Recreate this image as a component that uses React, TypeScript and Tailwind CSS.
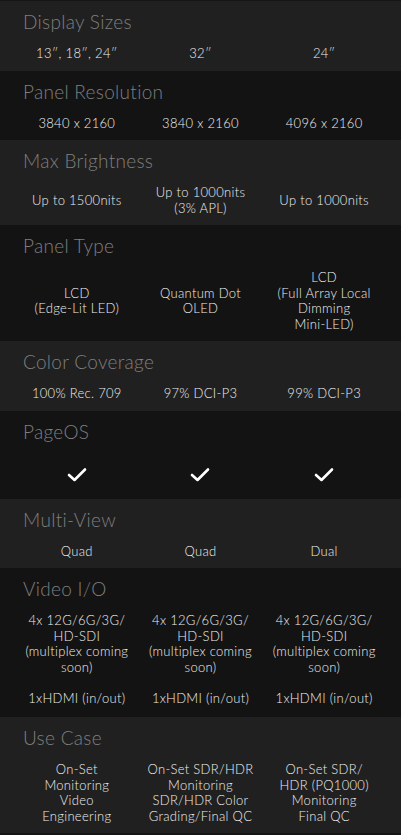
import React from "react";

type Row = { title: string; values: (string[] | "check")[]; light: boolean; pb?: string };

const rows: Row[] = [
  { title: "Display Sizes", values: [["13″, 18″, 24″"], ["32″"], ["24″"]], light: true },
  { title: "Panel Resolution", values: [["3840 x 2160"], ["3840 x 2160"], ["4096 x 2160"]], light: false },
  { title: "Max Brightness", values: [["Up to 1500nits"], ["Up to 1000nits", "(3% APL)"], ["Up to 1000nits"]], light: true },
  {
    title: "Panel Type",
    values: [["LCD", "(Edge-Lit LED)"], ["Quantum Dot", "OLED"], ["LCD", "(Full Array Local", "Dimming", "Mini-LED)"]],
    light: false,
  },
  { title: "Color Coverage", values: [["100% Rec. 709"], ["97% DCI-P3"], ["99% DCI-P3"]], light: true },
  { title: "PageOS", values: ["check", "check", "check"], light: false },
  { title: "Multi-View", values: [["Quad"], ["Quad"], ["Dual"]], light: true },
  {
    title: "Video I/O",
    values: [
      ["4x 12G/6G/3G/", "HD-SDI", "(multiplex coming", "soon)", "\u00a0", "1xHDMI (in/out)"],
      ["4x 12G/6G/3G/", "HD-SDI", "(multiplex coming", "soon)", "\u00a0", "1xHDMI (in/out)"],
      ["4x 12G/6G/3G/", "HD-SDI", "(multiplex coming", "soon)", "\u00a0", "1xHDMI (in/out)"],
    ],
    light: false,
    pb: "pb-[11px]",
  },
  {
    title: "Use Case",
    values: [
      ["On-Set", "Monitoring", "Video", "Engineering"],
      ["On-Set SDR/HDR", "Monitoring", "SDR/HDR Color", "Grading/Final QC"],
      ["On-Set SDR/", "HDR (PQ1000)", "Monitoring", "Final QC"],
    ],
    light: true,
  },
];

function Check() {
  return (
    <svg width="20" height="15" viewBox="0 0 20 15" fill="none">
      <path d="M2 8 L7.5 13 L18 2.5" stroke="#ffffff" strokeWidth="2.6" strokeLinecap="round" strokeLinejoin="round" />
    </svg>
  );
}

export default function App() {
  return (
    <div
      className="w-[401px] min-h-[835px] bg-[#151515] pt-[1px]"
      style={{ fontFamily: "Lato, 'Open Sans', sans-serif" }}
    >
      {rows.map((r) => (
        <div
          key={r.title}
          className={`${r.light ? "bg-[#202020]" : "bg-[#131313]"} px-[15px] ${r.pb ?? "pb-[9px]"}`}
        >
          <div className="pl-[8px] pt-[9px] h-[45px] text-[19px] leading-[24px] font-light text-[#7f7f7f] tracking-[0.3px]">
            {r.title}
          </div>
          <div className="grid grid-cols-3 items-center">
            {r.values.map((v, i) =>
              v === "check" ? (
                <div key={i} className="flex h-[34px] items-center justify-center pt-[4px]">
                  <Check />
                </div>
              ) : (
                <div key={i} className="text-center text-[13px] leading-[15.5px] font-light text-[#eeeeee] tracking-[0.3px]">
                  {v.map((line, j) => (
                    <div key={j}>{line}</div>
                  ))}
                </div>
              )
            )}
          </div>
        </div>
      ))}
    </div>
  );
}
